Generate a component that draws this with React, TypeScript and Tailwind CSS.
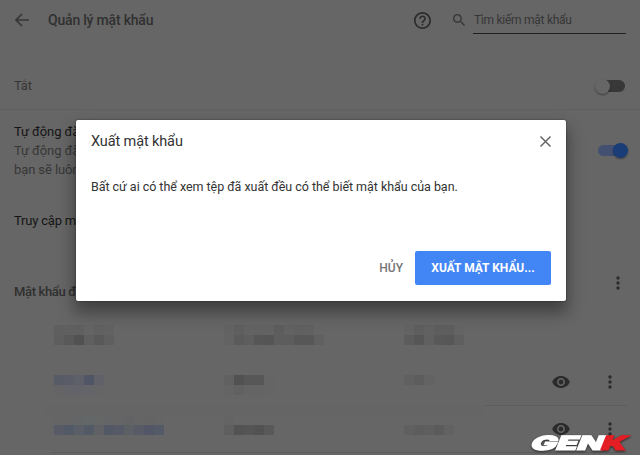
import type { ReactNode } from "react";

function Mosaic({ rows, className }: { rows: string[][]; className: string }) {
  return (
    <div className={`flex flex-col ${className}`}>
      {rows.map((row, i) => (
        <div key={i} className="flex h-[10px]">
          {row.map((color, j) => (
            <span key={j} className="h-[10px] w-[10px] shrink-0" style={{ backgroundColor: color }} />
          ))}
        </div>
      ))}
    </div>
  );
}

function Dots({ className = "" }: { className?: string }) {
  return (
    <svg viewBox="0 0 4 14" className={`h-[14px] w-1 fill-[#2b2b2b] ${className}`}>
      <circle cx="2" cy="2" r="1.7" />
      <circle cx="2" cy="7" r="1.7" />
      <circle cx="2" cy="12" r="1.7" />
    </svg>
  );
}

function Eye() {
  return (
    <svg viewBox="1 4.5 22 15" className="h-[12px] w-[18px] fill-[#2b2b2b]">
      <path d="M12 4.5C7 4.5 2.73 7.61 1 12c1.73 4.39 6 7.5 11 7.5s9.27-3.11 11-7.5c-1.73-4.39-6-7.5-11-7.5zM12 17c-2.76 0-5-2.24-5-5s2.24-5 5-5 5 2.24 5 5-2.24 5-5 5zm0-8c-1.66 0-3 1.34-3 3s1.34 3 3 3 3-1.34 3-3-1.34-3-3-3z" />
    </svg>
  );
}

function TableRow({ className, cells, actions }: { className: string; cells: string[][][]; actions?: ReactNode }) {
  return (
    <div className={`flex ${className}`}>
      <Mosaic className="w-[170px] shrink-0" rows={cells[0]} />
      <Mosaic className="w-[180px] shrink-0" rows={cells[1]} />
      <Mosaic className="w-[148px] shrink-0" rows={cells[2]} />
      {actions}
    </div>
  );
}

const header: string[][][] = [
  [
    ["#5f5f5f", "#606060", "#606060", "#646464", "#616161", "#626262"],
    ["#5e5e5e", "#595959", "#515151", "#5f5f5f", "#595959", "#5f5f5f"],
  ],
  [
    ["#636363", "#5f5f5f", "#636363", "#626262", "#636363", "#5d5d5d", "#626262", "#606060", "#616161", "#656565"],
    ["#636363", "#5b5b5b", "#5e5e5e", "#565656", "#555555", "#5d5d5d", "#5d5d5d", "#575757", "#575757", "#606060"],
  ],
  [
    ["#636363", "#5e5e5e", "#616161", "#5e5e5e", "#5e5e5e", "#646464"],
    ["#5c5c5c", "#565656", "#606060", "#595959", "#575757", "#5f5f5f"],
  ],
];

const first: string[][][] = [
  [
    ["#575b65", "#5a5d67", "#5d6069", "#505665", "#606169"],
    ["#646467", "#626469", "#626469", "#636569", "#656565"],
  ],
  [
    ["#616161", "#515151", "#575757", "#575757", "#656565"],
    ["#646464", "#616161", "#646464", "#646464", "#656565"],
  ],
  [["#616161", "#5d5d5d", "#636363"]],
];

const second: string[][][] = [
  [
    ["#656565", "#656565", "#646566", "#636767", "#656666", "#646567", "#656565", "#636365", "#656565", "#646464", "#656565"],
    ["#585b65", "#525967", "#595e67", "#525b65", "#606165", "#535867", "#565a67", "#5c6065", "#585b65", "#525666", "#555a68"],
  ],
  [["#646464"], ["#5f5f5f", "#535353", "#555555", "#525252", "#595959"]],
  [["#666666"], ["#606060", "#5d5d5d", "#5f5f5f", "#5b5b5b", "#626262"]],
];

function Logo() {
  return (
    <svg
      viewBox="0 0 110 26"
      className="absolute left-[525px] top-[429px] h-[26px] w-[110px] overflow-visible drop-shadow-[0_1px_1px_rgba(0,0,0,0.6)]"
      fontFamily="Inter, sans-serif"
      fontWeight="900"
      fontSize="19.5"
    >
      <g transform="translate(4 20.6) skewX(-22)" strokeWidth="1.1" strokeLinejoin="miter">
        <text textLength="73" lengthAdjust="spacingAndGlyphs" fill="#fff" stroke="#fff">GEN</text>
        <text x="70.5" textLength="25" lengthAdjust="spacingAndGlyphs" fill="#e31e24" stroke="#e31e24">K</text>
      </g>
    </svg>
  );
}

export default function App() {
  return (
    <div className="relative h-[455px] w-[640px] overflow-hidden bg-[#666666] font-['Roboto',sans-serif] text-[13px] tracking-[-0.2px] text-[#363636]">
      <header className="flex h-[40px] items-center pl-[15px] pr-[14px]">
        <svg viewBox="0 0 14 14" className="h-[14px] w-[14px] fill-none stroke-[#363636] stroke-[1.6]">
          <path d="M14 7H1.5M7 1L1 7l6 6" />
        </svg>
        <h1 className="ml-[19px] w-[366px] whitespace-nowrap text-[14px] font-medium leading-5 text-[#303030]">Quản lý mật khẩu</h1>
        <svg viewBox="2 2 20 20" className="h-[17px] w-[17px] fill-[#2c2c2c]">
          <path d="M11 18h2v-2h-2v2zm1-16C6.48 2 2 6.48 2 12s4.48 10 10 10 10-4.48 10-10S17.52 2 12 2zm0 18c-4.41 0-8-3.59-8-8s3.59-8 8-8 8 3.59 8 8-3.59 8-8 8zm0-14c-2.21 0-4 1.79-4 4h2c0-1.1.9-2 2-2s2 .9 2 2c0 2-3 1.75-3 5h2c0-2.25 3-2.5 3-5 0-2.21-1.79-4-4-4z" />
        </svg>
        <svg viewBox="3 3 17.5 17.5" className="ml-[22px] h-[12px] w-[12px] fill-[#363636]">
          <path d="M15.5 14h-.79l-.28-.27C15.41 12.59 16 11.11 16 9.5 16 5.91 13.09 3 9.5 3S3 5.91 3 9.5 5.91 16 9.5 16c1.61 0 3.09-.59 4.23-1.57l.27.28v.79l5 4.99L20.49 19l-4.99-5zm-6 0C7.01 14 5 11.99 5 9.5S7.01 5 9.5 5 14 7.01 14 9.5 11.99 14 9.5 14z" />
        </svg>
        <div className="ml-[8px] mt-[4px] h-[24px] w-[153px] shrink-0 border-b border-[#202020] pl-px text-[12px] leading-[20px] tracking-[-0.27px]">Tìm kiếm mật khẩu</div>
      </header>

      <section className="flex h-[70px] items-start justify-between border-b border-[#5f5f5f] pl-[14px] pr-[15px] pt-[36px]">
        <span className="leading-5">Tắt</span>
        <span className="mt-[4px] flex h-[12px] w-[30px] items-center rounded-full">
          <span className="z-10 h-[15px] w-[15px] shrink-0 rounded-full bg-[#666666] shadow-[0_1px_2px_rgba(0,0,0,0.4)]" />
          <span className="-ml-[10px] h-[12px] w-[25px] shrink-0 rounded-full bg-[#383838]" />
        </span>
      </section>

      <section className="flex h-[91px] justify-between pl-[14px] pr-[12px] pt-[12px]">
        <div className="w-[240px] leading-[19px] tracking-[-0.1px]">
          <p className="text-[#151515]">Tự động đăng</p>
          <p>Tự động đăng</p>
          <p>bạn sẽ luôn</p>
        </div>
        <span className="mt-[21px] flex h-[15px] w-[30px] items-center">
          <span className="h-[11px] w-[26px] shrink-0 rounded-full bg-[#435072]" />
          <span className="-ml-[11px] h-[15px] w-[15px] shrink-0 rounded-full bg-[#1b3d77] shadow-[0_1px_2px_rgba(0,0,0,0.4)]" />
        </span>
      </section>
      <p className="flex h-[40px] items-center pl-[14px] text-[#151515]">Truy cập mật</p>

      <div className="mt-[34px] flex h-[34px] items-center justify-between pl-[14px] pr-[20px]">
        <h2 className="text-[13px] font-medium tracking-[-0.35px] text-[#303030]">Mật khẩu đã</h2>
        <Dots className="-mt-[18px]" />
      </div>

      <div className="mt-[16px] flex h-[130px] flex-col">
        <TableRow className="ml-[54px] h-[50px]" cells={header} />
        <TableRow
          className="ml-[54px] h-[30px]"
          cells={first}
          actions={
            <div className="flex h-[14px] items-center">
              <Eye />
              <Dots className="ml-[38px]" />
            </div>
          }
        />
        <div className="ml-[44px] mr-[13px] flex h-[10px] items-start">
          <span className="h-[10px] w-[441px] bg-[#656565]" />
          <span className="h-px flex-1 bg-[#5d5d5d]" />
        </div>
        <TableRow
          className="ml-[54px] h-[37px]"
          cells={second}
          actions={
            <div className="mt-[7px] flex h-[14px] items-center">
              <Eye />
              <Dots className="ml-[38px]" />
            </div>
          }
        />
        <div className="ml-[52px] mr-[13px] h-px shrink-0 bg-[#5d5d5d]" />
      </div>

      <div role="dialog" className="absolute left-[76px] top-[120px] flex h-[181px] w-[490px] flex-col rounded-[2px] bg-white shadow-[0_10px_16px_2px_rgba(0,0,0,0.36),0_0_2px_rgba(0,0,0,0.5)]">
        <div className="flex h-[42px] items-center justify-between pl-[15px] pr-[15px]">
          <h2 className="mt-px text-[14.5px] tracking-[-0.12px] text-[#333333]">Xuất mật khẩu</h2>
          <svg viewBox="0 0 11 11" className="h-[11px] w-[11px] overflow-visible fill-none stroke-[#666] stroke-[1.5]">
            <path d="M.5.5l10 10M10.5.5l-10 10" />
          </svg>
        </div>
        <p className="mt-[15px] pl-[15px] text-[12.5px] leading-5 tracking-[-0.04px] text-[#333333]">Bất cứ ai có thể xem tệp đã xuất đều có thể biết mật khẩu của bạn.</p>
        <div className="mt-auto mb-[16px] flex h-[34px] items-center justify-end pr-[15px] text-[12px] font-medium tracking-normal">
          <button className="mr-[12px] text-[#757575]">HỦY</button>
          <button className="h-[34px] w-[136px] rounded-[2px] bg-[#4285f4] font-bold text-white">XUẤT MẬT KHẨU...</button>
        </div>
      </div>

      <Logo />
    </div>
  );
}
